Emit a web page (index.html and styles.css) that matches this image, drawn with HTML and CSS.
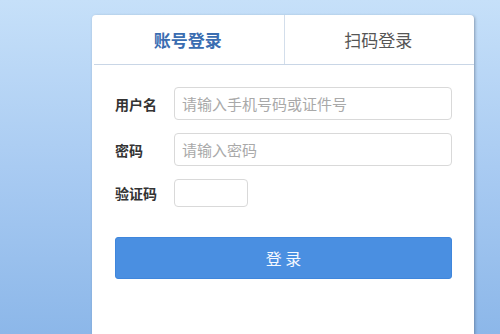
FILE: index.html
```html
<!DOCTYPE html>
<html lang="zh-CN">
<head>
  <meta charset="UTF-8">
  <meta name="viewport" content="width=device-width, initial-scale=1.0">
  <title>登录</title>
  <link rel="stylesheet" href="styles.css">
</head>
<body>
  <div class="login-box">
    <div class="tabs">
      <div class="tab active">账号登录</div>
      <div class="tab">扫码登录</div>
    </div>

    <form class="login-form">
      <div class="row">
        <label for="user">用户名</label>
        <input type="text" id="user" placeholder="请输入手机号码或证件号">
      </div>
      <div class="row">
        <label for="pwd">密码</label>
        <input type="password" id="pwd" placeholder="请输入密码">
      </div>
      <div class="row">
        <label for="code">验证码</label>
        <input type="text" id="code" class="code">
      </div>
      <button type="button" class="submit">登 录</button>
    </form>
  </div>
</body>
</html>
```

FILE: styles.css
```css
html, body {
  height: 100%;
}
body {
  margin: 0;
  font-family: "Noto Sans CJK SC", "Noto Sans", sans-serif;
  background: linear-gradient(to bottom, #c6e0f9 0%, #a9cbf2 50%, #8cb7e9 100%);
  overflow: hidden;
}
.login-box {
  box-sizing: border-box;
  margin: 15px 0 0 92px;
  width: 382px;
  height: calc(100% - 15px);
  background: #fff;
  border-radius: 4px 4px 0 0;
  box-shadow: 1px 1px 3px rgba(60, 70, 90, 0.45);
}
.tabs {
  display: flex;
  height: 49px;
  border-bottom: 1px solid #c9d6e6;
  margin-left: 2px;
}
.tab {
  flex: 1;
  display: flex;
  align-items: center;
  justify-content: center;
  font-size: 17px;
  color: #555;
  margin-left: -2px;
}
.tab.active {
  color: #3a6db1;
  font-weight: bold;
  border-right: 1px solid #d3deeb;
}
.login-form {
  padding: 22px 22px 0 23px;
}
.row {
  display: flex;
  align-items: center;
  margin-bottom: 13px;
}
.row label {
  width: 59px;
  flex-shrink: 0;
  font-size: 14px;
  font-weight: bold;
  color: #333;
}
.row input {
  flex: 1;
  box-sizing: border-box;
  height: 33px;
  padding: 0 7px;
  border: 1px solid #d9d9d9;
  border-radius: 4px;
  font-size: 15px;
  font-family: inherit;
  color: #333;
  outline: none;
}
.row input::placeholder {
  color: #a9a9a9;
}
.row input.code {
  flex: none;
  width: 74px;
  height: 28px;
}
.submit {
  display: block;
  width: 100%;
  height: 42px;
  margin-top: 30px;
  border: 1px solid #3f86dc;
  border-radius: 3px;
  background: #4a8fe1;
  color: #f4f8ff;
  font-size: 16px;
  font-family: inherit;
  cursor: pointer;
}
```
